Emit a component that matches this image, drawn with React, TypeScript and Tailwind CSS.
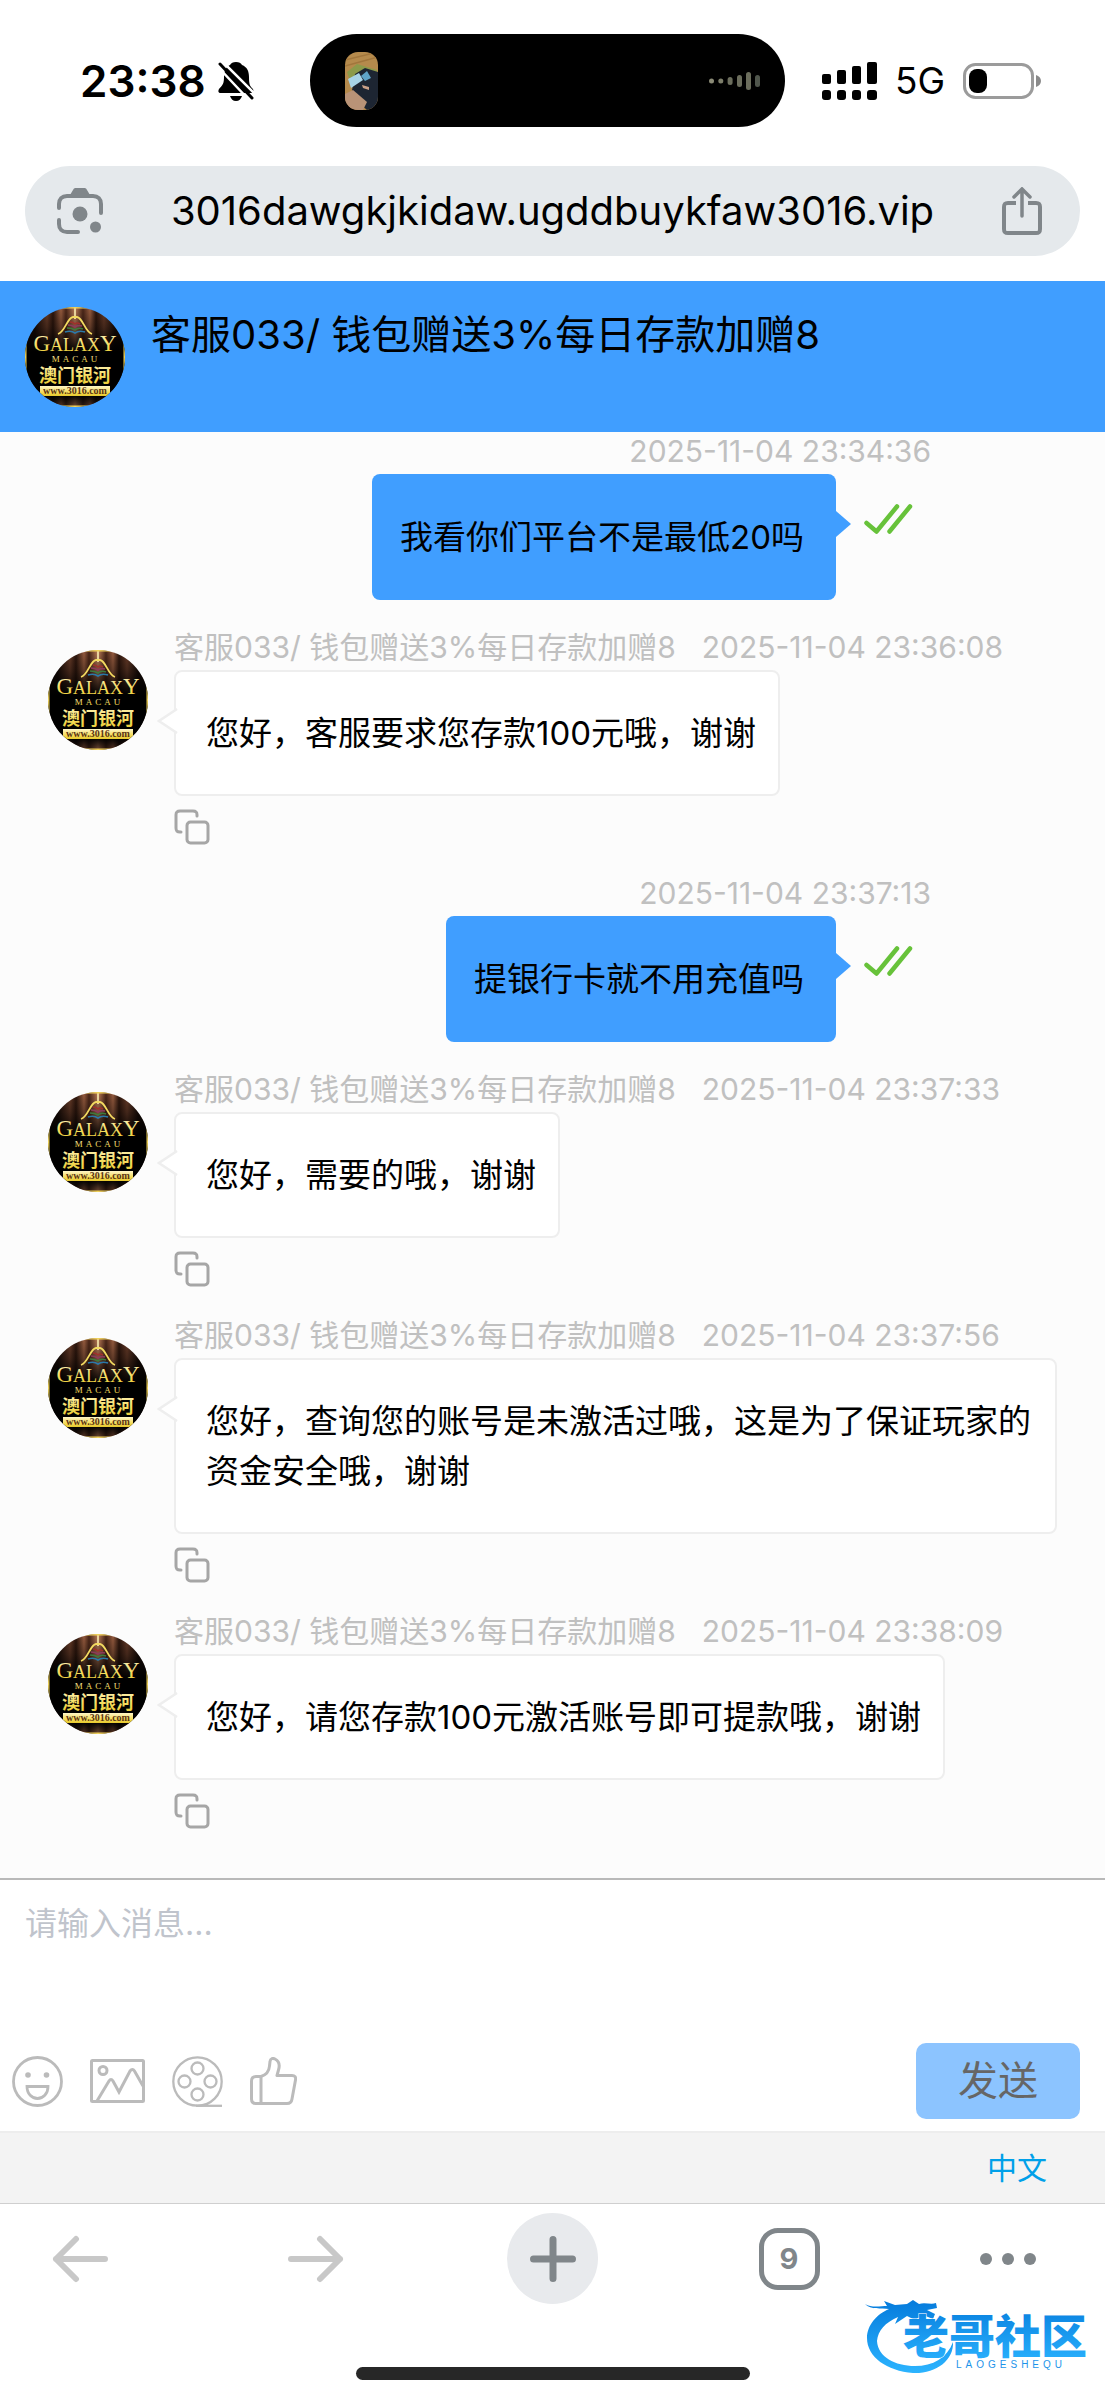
import { useState } from "react";

const AGENT_NAME = "客服033/ 钱包赠送3%每日存款加赠8";

interface Message {
  id: number;
  from: "me" | "agent";
  time: string;
  text: string;
}

const messages: Message[] = [
  { id: 1, from: "me", time: "2025-11-04 23:34:36", text: "我看你们平台不是最低20吗" },
  { id: 2, from: "agent", time: "2025-11-04 23:36:08", text: "您好，客服要求您存款100元哦，谢谢" },
  { id: 3, from: "me", time: "2025-11-04 23:37:13", text: "提银行卡就不用充值吗" },
  { id: 4, from: "agent", time: "2025-11-04 23:37:33", text: "您好，需要的哦，谢谢" },
  {
    id: 5,
    from: "agent",
    time: "2025-11-04 23:37:56",
    text: "您好，查询您的账号是未激活过哦，这是为了保证玩家的资金安全哦，谢谢",
  },
  { id: 6, from: "agent", time: "2025-11-04 23:38:09", text: "您好，请您存款100元激活账号即可提款哦，谢谢" },
];

function Avatar() {
  return (
    <svg viewBox="0 0 100 100" className="size-[100px] shrink-0 rounded-full" role="img" aria-label="Galaxy Macau">
      <defs>
        <linearGradient id="curtain" x1="0" x2="1" y1="0" y2="0">
          <stop offset="0.1" stopColor="#1a0d08" />
          <stop offset="0.22" stopColor="#6a3d29" />
          <stop offset="0.28" stopColor="#2d160d" />
          <stop offset="0.36" stopColor="#9a5e40" />
          <stop offset="0.41" stopColor="#4a2618" />
          <stop offset="0.5" stopColor="#c07f5a" />
          <stop offset="0.58" stopColor="#4a2618" />
          <stop offset="0.65" stopColor="#9a5e40" />
          <stop offset="0.71" stopColor="#2d160d" />
          <stop offset="0.79" stopColor="#6a3d29" />
          <stop offset="0.9" stopColor="#1a0d08" />
        </linearGradient>
        <linearGradient id="shade" x1="0" x2="0" y1="0" y2="1">
          <stop offset="0" stopColor="#000" stopOpacity="0" />
          <stop offset="0.2" stopColor="#000" stopOpacity="0.35" />
          <stop offset="0.45" stopColor="#000" />
          <stop offset="0.88" stopColor="#000" />
          <stop offset="1" stopColor="#000" stopOpacity="0.4" />
        </linearGradient>
        <linearGradient id="gold" x1="0" x2="0" y1="0" y2="1">
          <stop offset="0" stopColor="#fff6c8" />
          <stop offset="0.6" stopColor="#f4dc5c" />
          <stop offset="1" stopColor="#e8c92c" />
        </linearGradient>
      </defs>
      <rect width="100" height="100" fill="url(#curtain)" />
      <rect width="100" height="100" fill="url(#shade)" />
      <path d="M50 0V12" stroke="#f8ecb0" strokeWidth="1.6" />
      <g fill="none" strokeWidth="1.6">
        <path d="M45 15q3 0 5 2q2-2 5 0" stroke="#a0302c" />
        <path d="M43 18q4 0 7 2q3-2 7-1" stroke="#8c3a5a" />
        <path d="M42 21q5 0 8 2q3-3 8-1" stroke="#3f7a3c" />
        <path d="M40 25q6-2 10 1q4-3 10-1" stroke="#2b78a8" />
      </g>
      <path
        d="M33 27C40 25 42 11 48 10H52C58 11 60 25 67 27"
        fill="none"
        stroke="#f3da60"
        strokeWidth="1.8"
      />
      <g fill="url(#gold)" textAnchor="middle" className="font-['Liberation_Serif',serif]">
        <text x="50" y="44" fontSize="18">
          <tspan fontSize="23">G</tspan>ALAX<tspan fontSize="23">Y</tspan>
        </text>
        <text x="51" y="55" fontSize="9" letterSpacing="3">
          MACAU
        </text>
      </g>
      <text
        x="50"
        y="75"
        fontSize="18"
        fontWeight="700"
        textAnchor="middle"
        fill="url(#gold)"
        className="font-['Noto_Sans_CJK_SC',sans-serif]"
      >
        澳门银河
      </text>
      <rect x="15" y="79" width="70" height="10" fill="url(#gold)" />
      <text
        x="50"
        y="87"
        fontSize="10"
        fontWeight="700"
        textAnchor="middle"
        fill="#5b3413"
        className="font-['Liberation_Serif',serif]"
      >
        www.3016.com
      </text>
      <rect width="100" height="100" fill="none" stroke="#f0d35a" strokeWidth="3" />
    </svg>
  );
}

function StatusBar() {
  return (
    <div className="flex h-[93px] items-center pl-[80px] pr-16">
      <div className="flex w-[230px] items-center gap-3">
        <span className="text-[44px] leading-none font-semibold">23:38</span>
        {/* 静音图标 */}
        <svg viewBox="0 0 36 40" className="h-10 w-9 shrink-0">
          <path
            d="M18 1c3 0 5 1 6 3c5 2 7 6 7 12c0 8 1 9 4 12c1 2 0 4-2 4H3c-3 0-3-2-2-4c4-4 5-6 5-12c0-6 2-10 6-12c1-2 3-3 6-3z"
            fill="#000"
          />
          <path d="M12 35h12c-1 3-3 5-6 5s-5-2-6-5z" fill="#000" />
          <path d="M4 0L37 33M0 6L32 40" stroke="#fff" strokeWidth="2.500" />
          <path d="M2 3L34 37" stroke="#000" strokeWidth="3" strokeLinecap="round" />
        </svg>
      </div>
      <div className="flex h-full flex-1 items-center justify-between rounded-full bg-black pl-[35px] pr-6">
        <svg viewBox="0 0 33 58" className="h-[58px] w-[33px] rounded-[13px]">
          <rect width="33" height="58" fill="#b58a4c" />
          <path d="M0 8L33 0M0 14L33 5" stroke="#a1763c" strokeWidth="1.5" />
          <path d="M2 20L12 12L32 18V24L4 26z" fill="#8c9a4a" />
          <path d="M10 22L20 16L33 20V58H22L6 44z" fill="#1d2532" />
          <path d="M0 42L8 38L22 50L18 58H0z" fill="#b99377" />
          <path d="M3 27L14 21L18 28L6 36z" fill="#a8d3e6" />
          <path d="M16 24l6-5l4 7l-6 3z" fill="#5fa4c8" />
          <path d="M17 33l7 2v3l-6-2z" fill="#c9a088" />
        </svg>
        <svg viewBox="0 0 52 20" className="h-5 w-[52px]" fill="#6b6d5c">
          <rect x="0" y="7.500" width="5" height="5" rx="2.500" fill="#8b8b76" />
          <rect x="9.300" y="7.500" width="5" height="5" rx="2.500" fill="#7d7e6a" />
          <rect x="18.600" y="6" width="5" height="8" rx="2.500" />
          <rect x="28" y="4" width="5" height="12" rx="2.500" />
          <rect x="37" y="1" width="5" height="18" rx="2.500" />
          <rect x="46" y="4" width="5" height="12" rx="2.500" fill="#50564c" />
        </svg>
      </div>
      <div className="flex items-center gap-[18px] pl-[37px]">
        <svg viewBox="0 0 55 38" className="h-[38px] w-[55px]">
          <rect x="0" y="12" width="9" height="10" rx="2" />
          <rect x="15" y="8" width="9" height="14" rx="2" />
          <rect x="30" y="4" width="9" height="18" rx="2" />
          <rect x="45" y="0" width="10" height="22" rx="2" />
          <rect x="0" y="28" width="9" height="10" rx="3" />
          <rect x="15" y="28" width="9" height="10" rx="3" />
          <rect x="30" y="28" width="9" height="10" rx="3" />
          <rect x="45" y="28" width="10" height="10" rx="3" />
        </svg>
        <span className="text-[37px] leading-none">5G</span>
        <svg viewBox="0 0 78 36" className="h-9 w-[78px]">
          <rect x="1.500" y="1.500" width="68" height="33" rx="11" fill="none" stroke="#9b9b9b" strokeWidth="3" />
          <rect x="6" y="6" width="18" height="24" rx="8" />
          <path d="M73 12c3 1 5 3 5 6s-2 5-5 6z" fill="#8a8a8a" />
        </svg>
      </div>
    </div>
  );
}

function AddressBar() {
  return (
    <div className="mx-[25px] mt-[39px] mb-[25px] flex h-[90px] items-center justify-between rounded-full bg-[#e5e9ec] pl-8 pr-[38px]">
      <button aria-label="相机搜索">
        <svg viewBox="0 0 46 47" className="h-[47px] w-[46px]" fill="none" stroke="#80868a" strokeWidth="4" strokeLinecap="round">
          <path d="M2 20V16c0-5 3-8 8-8h26c5 0 8 3 8 8v9M2 32v4c0 5 3 8 8 8h11" />
          <path d="M13 7l3-5c1-2 2-2 3-2h8c1 0 2 0 3 2l3 5z" fill="#80868a" stroke="none" />
          <circle cx="23" cy="26" r="7.500" fill="#80868a" stroke="none" />
          <circle cx="38.500" cy="39" r="5.500" fill="#80868a" stroke="none" />
        </svg>
      </button>
      <span className="text-[40px] leading-none">3016dawgkjkidaw.ugddbuykfaw3016.vip</span>
      <button aria-label="分享">
        <svg viewBox="0 0 40 48" className="h-12 w-10" fill="none" stroke="#80868a" strokeWidth="4" strokeLinecap="round">
          <path d="M14 16H6c-3 0-4 1-4 4v22c0 3 1 4 4 4h28c3 0 4-1 4-4V20c0-3-1-4-4-4h-8" strokeLinecap="butt" />
          <path d="M20 29V3M12 10l8-8l8 8" strokeWidth="3.500" />
        </svg>
      </button>
    </div>
  );
}

function MyMessage({ message }: { message: Message }) {
  return (
    <li className="mb-6 flex flex-col items-end pr-[174px]">
      <time className="text-[30px] leading-[46px] text-[#c0c0c0]">{message.time}</time>
      <div className="flex items-start pr-[18px]">
        <div className="relative rounded-lg bg-[#409eff] py-[38px] pr-8 pl-7 text-[33px] leading-[50px]">
          {message.text}
          <svg viewBox="0 0 16 26" className="absolute left-full top-[37px] h-[26px] w-4">
            <path d="M0 0L15 13L0 26z" fill="#409eff" />
          </svg>
        </div>
        <svg
          viewBox="0 0 49 30"
          className="mt-[30px] ml-7 h-[30px] w-[49px]"
          fill="none"
          stroke="#67c23a"
          strokeWidth="4.500"
          strokeLinecap="round"
          strokeLinejoin="round"
        >
          <path d="M2.500 19L12.500 27.500L33 2.500M25.500 27.500L46 2.500" />
        </svg>
      </div>
    </li>
  );
}

function AgentMessage({ message }: { message: Message }) {
  return (
    <li className="mb-6 flex items-start gap-[26px] pl-12 pr-12">
      <div className="pt-[26px]">
        <Avatar />
      </div>
      <div className="flex flex-col items-start">
        <div className="flex gap-[26px] text-[30px] leading-[46px] whitespace-nowrap text-[#c0c0c0]">
          <span>{AGENT_NAME}</span>
          <time>{message.time}</time>
        </div>
        <div className="relative rounded-lg border-2 border-[#eeeeee] bg-white py-9 pr-[22px] pl-[30px] text-[33px] leading-[50px]">
          {message.text}
          <svg viewBox="0 0 21 26" className="absolute top-9 right-full h-[26px] w-[21px] translate-x-[2px]">
            <path d="M20 1L2 13L20 25" fill="#fff" stroke="#eeeeee" strokeWidth="2.500" />
            <path d="M20 3V23" stroke="#fff" strokeWidth="2" />
          </svg>
        </div>
        <button aria-label="复制" className="mt-[13px] mb-px">
          <svg viewBox="0 0 36 36" className="size-9" fill="none" stroke="#a6a6a6" strokeWidth="3" strokeLinecap="round">
            <rect x="13" y="13" width="21" height="21" rx="3.500" />
            <path d="M7 23H6c-3 0-4-1-4-4V6c0-3 1-4 4-4h13c3 0 4 1 4 4v1" />
          </svg>
        </button>
      </div>
    </li>
  );
}

function Composer() {
  const [text, setText] = useState("");

  return (
    <form className="border-t-2 border-[#b9b9b9] bg-white" onSubmit={(e) => e.preventDefault()}>
      <textarea
        aria-label="消息"
        value={text}
        onChange={(e) => setText(e.target.value)}
        placeholder="请输入消息..."
        className="block h-[163px] w-full resize-none px-[25px] py-5 text-[32px] leading-[48px] outline-none placeholder:text-[#c0c4cc]"
      />
      <div className="flex items-center justify-between pb-3 pl-3 pr-[25px]">
        <div className="flex items-center gap-[27px] text-[#bbbbbb]">
          {/* 表情 */}
          <button type="button" aria-label="表情">
            <svg viewBox="0 0 51 51" className="size-[51px]" fill="none" stroke="currentColor" strokeWidth="2.800">
              <circle cx="25.500" cy="25.500" r="24" />
              <circle cx="16" cy="19" r="2.800" fill="currentColor" stroke="none" />
              <circle cx="34.500" cy="19" r="2.800" fill="currentColor" stroke="none" />
              <path d="M15 30.500H36C36 38 31 42.500 25.500 42.500S15 38 15 30.500z" />
            </svg>
          </button>
          {/* 图片 */}
          <button type="button" aria-label="图片">
            <svg viewBox="0 0 55 44" className="h-11 w-[55px]" fill="none" stroke="currentColor" strokeWidth="3">
              <rect x="1.500" y="1.500" width="52" height="41" rx="1" />
              <circle cx="13" cy="11.500" r="4" />
              <path d="M7 42L19 22q2-3 4 0L29 33L40 12q2.500-3 4.500 0L53 27" />
            </svg>
          </button>
          {/* 视频 */}
          <button type="button" aria-label="视频">
            <svg viewBox="0 0 51 51" className="size-[51px]" fill="none" stroke="currentColor" strokeWidth="2.300">
              <circle cx="25.500" cy="25.500" r="24.200" />
              <circle cx="25.500" cy="12.500" r="6" />
              <circle cx="25.500" cy="38.500" r="6" />
              <circle cx="12.500" cy="25.500" r="6" />
              <circle cx="38.500" cy="25.500" r="6" />
              <path d="M24 49.800C30 49.500 32 48 35 47L37 49.800z" fill="currentColor" stroke="none" />
              <path d="M24 49.800H50" />
            </svg>
          </button>
          {/* 评价 */}
          <button type="button" aria-label="评价">
            <svg viewBox="0 0 47 48" className="h-12 w-[47px]" fill="none" stroke="currentColor" strokeWidth="3" strokeLinejoin="round">
              <path d="M11 19.500C16 18 19 15 19.500 9L20 4.500C20.500 1 23 1 25 2C29 4 30 8 28.500 13L27 18.500H42C45 18.500 46 20 45.500 23L42 42C41.500 45.500 40 46.500 37 46.500H6C3 46.500 1.500 45 1.500 42V24C1.500 21 3 19.500 6 19.500zM11 20V46" />
            </svg>
          </button>
        </div>
        <button
          type="submit"
          disabled={!text}
          className="h-19 w-[164px] rounded-[10px] bg-[#8cc4ff] text-[40px] leading-none text-[#666]"
        >
          发送
        </button>
      </div>
    </form>
  );
}

function Watermark() {
  return (
    <svg viewBox="0 0 224 80" className="absolute right-4 bottom-6 h-20 w-56" role="img" aria-label="老哥社区">
      <defs>
        <linearGradient id="azure" x1="0" x2="0" y1="0" y2="1">
          <stop offset="0" stopColor="#057bdc" />
          <stop offset="1" stopColor="#2cb4ff" />
        </linearGradient>
      </defs>
      <path
        d="M0 9C6 13 16 11 22 11L19 6L30 10L42 9L48 5L54 9C60 7 66 10 71 8L72 13L62 15L70 19L68 24L58 20L50 25L42 21L30 29L33 22C20 28 13 35 12 46C13 62 30 71 50 71C68 71 82 63 88 47C89 66 70 79 48 78C22 76 2 62 2 43C2 30 12 19 24 14C16 13 6 15 0 9z"
        fill="url(#azure)"
      />
      <text
        x="38"
        y="58"
        fontSize="46"
        fontWeight="900"
        fill="url(#azure)"
        stroke="#fff"
        strokeWidth="1"
        paintOrder="stroke"
        className="font-['Noto_Sans_CJK_SC',sans-serif]"
      >
        老哥社区
      </text>
      <text x="91" y="73" fontSize="10" letterSpacing="4" fill="#1d94ea" className="font-['Liberation_Sans',sans-serif]">
        LAOGESHEQU
      </text>
    </svg>
  );
}

function BrowserToolbar() {
  return (
    <nav className="relative h-[196px] border-t border-[#cfcfcf] bg-white px-[34px] pt-[9px]">
      <div className="flex justify-between text-[#80868a]">
        <button aria-label="后退" className="flex size-[91px] items-center justify-center text-[#c8c8c8]">
          <svg viewBox="0 0 56 48" className="h-12 w-14" fill="none" stroke="currentColor" strokeWidth="6" strokeLinecap="round" strokeLinejoin="round">
            <path d="M53 24H4M24 4L4 24L24 44" />
          </svg>
        </button>
        <button aria-label="前进" className="flex size-[91px] items-center justify-center text-[#c8c8c8]">
          <svg viewBox="0 0 56 48" className="h-12 w-14" fill="none" stroke="currentColor" strokeWidth="6" strokeLinecap="round" strokeLinejoin="round">
            <path d="M3 24H52M32 4L52 24L32 44" />
          </svg>
        </button>
        <button aria-label="新标签页" className="flex size-[91px] items-center justify-center rounded-full bg-[#e8eaed]">
          <svg viewBox="0 0 46 46" className="size-[46px]" stroke="currentColor" strokeWidth="7" strokeLinecap="round">
            <path d="M23 3.500V42.500M3.500 23H42.500" />
          </svg>
        </button>
        <button aria-label="标签页" className="flex size-[91px] items-center justify-center">
          <span className="flex h-[62px] w-[61px] items-center justify-center rounded-[19px] border-[5px] border-[#80868a] text-[29px] leading-none font-bold">
            9
          </span>
        </button>
        <button aria-label="更多" className="flex size-[91px] items-center">
          <svg viewBox="0 0 56 12" className="h-3 w-14" fill="currentColor">
            <circle cx="6" cy="6" r="6" />
            <circle cx="28" cy="6" r="6" />
            <circle cx="50" cy="6" r="6" />
          </svg>
        </button>
      </div>
      <div className="mx-auto mt-[63px] h-[13px] w-[394px] rounded-full bg-[#272727]" />
      <Watermark />
    </nav>
  );
}

export default function App() {
  return (
    <div className="bg-white pt-[34px] font-[Inter,'Noto_Sans_CJK_SC',sans-serif] text-black" lang="zh-CN">
      <StatusBar />
      <AddressBar />

      <header className="relative z-10 flex h-[151px] items-start gap-[26px] bg-[#409eff] px-[25px] pt-[26px]">
        <Avatar />
        <h1 className="text-[40px] leading-[56px]">{AGENT_NAME}</h1>
      </header>

      <main className="bg-[#fcfcfc] pb-6">
        <ul className="-mt-1 flow-root">
          {messages.map((message) =>
            message.from === "me" ? (
              <MyMessage key={message.id} message={message} />
            ) : (
              <AgentMessage key={message.id} message={message} />
            )
          )}
        </ul>
      </main>

      <Composer />

      <footer className="flex h-[72px] items-center justify-end border-t-2 border-[#ededed] bg-[#f3f3f3] pr-[58px]">
        <a href="#lang" className="text-[30px] leading-none text-[#00a0e9]">
          中文
        </a>
      </footer>

      <BrowserToolbar />
    </div>
  );
}
